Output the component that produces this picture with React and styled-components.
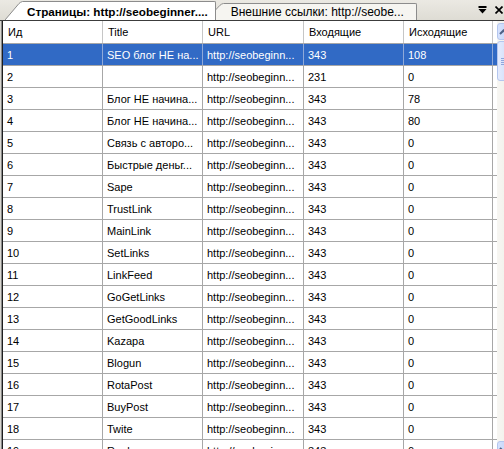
import React from 'react';
import styled, { createGlobalStyle } from 'styled-components';

const Global = createGlobalStyle`
  html, body { margin: 0; padding: 0; background: #ffffff; overflow: hidden; }
  body { font-family: Tahoma, "Liberation Sans", Arial, sans-serif; font-size: 11px; color: #000; }
  #root { width: 504px; height: 449px; }
`;

const Window = styled.div`
  width: 504px;
  height: 449px;
  overflow: hidden;
  display: flex;
  flex-direction: column;
  background: #e4e2da;
`;

const TabStrip = styled.div`
  height: 20px;
  flex-shrink: 0;
  display: flex;
  align-items: flex-end;
  padding-left: 5px;
  background: linear-gradient(#ebe9e3, #dedcd4);
  border-bottom: 1px solid #3c3c3c;
`;

const TabWrap = styled.div`
  position: relative;
  display: flex;
  align-items: stretch;
  flex-shrink: 0;
  height: ${p => (p.$active ? 19 : 17)}px;
  margin-left: ${p => (p.$first ? 0 : -10)}px;
  z-index: ${p => (p.$active ? 2 : 1)};
`;

const Slant = styled.svg`
  width: 18px;
  height: 100%;
  flex-shrink: 0;
  display: block;
`;

const TabBody = styled.div`
  display: flex;
  align-items: center;
  padding: 0 ${p => (p.$active ? 7 : 12)}px 0 ${p => (p.$active ? 4 : 7)}px;
  background: ${p => (p.$active ? '#ffffff' : '#f6f5f1')};
  border-top: 1px solid #8c8c8c;
  border-right: 1px solid #8c8c8c;
  border-top-right-radius: 2px;
  font-size: ${p => (p.$active ? 11.7 : 12)}px;
  font-weight: ${p => (p.$active ? 700 : 400)};
  white-space: nowrap;
  color: #000;
`;

const Spacer = styled.div`
  flex: 1;
`;

const ToolIcons = styled.div`
  display: flex;
  align-items: center;
  gap: 8px;
  height: 20px;
  padding-right: 1px;
  flex-shrink: 0;
`;

const Body = styled.div`
  height: 437px;
  flex-shrink: 0;
  display: flex;
  align-items: stretch;
`;

const LeftEdge = styled.div`
  width: 3px;
  flex-shrink: 0;
  background: linear-gradient(to right, #d8d6cf 0 1px, #8a8a8a 1px 2px, #1e1e1e 2px 3px);
`;

const ListPanel = styled.div`
  width: 494px;
  flex-shrink: 0;
  background: #ffffff;
  overflow: hidden;
`;

const COLS = '100px 100px 101px 100px 89px';

const HeaderRow = styled.div`
  display: grid;
  grid-template-columns: ${COLS};
  height: 22px;
  border-bottom: 1px solid #a7a7a7;
  background: #ffffff;
`;

const HeaderCell = styled.div`
  display: flex;
  align-items: center;
  padding-left: 5px;
  border-right: 1px solid #c6c6c6;
  font-size: 11px;
  white-space: nowrap;
  overflow: hidden;
`;

const Row = styled.div`
  display: grid;
  grid-template-columns: ${COLS};
  height: 21px;
  border-bottom: 1px solid #a7a7a7;
  background: ${p => (p.$selected ? '#316ac5' : '#ffffff')};
  color: ${p => (p.$selected ? '#ffffff' : '#000000')};
`;

const Cell = styled.div`
  display: flex;
  align-items: center;
  padding-left: 4px;
  border-right: 1px solid ${p => (p.$selected ? '#8fa9d8' : '#a7a7a7')};
  font-size: 11px;
  white-space: nowrap;
  overflow: hidden;
`;

const ScrollBar = styled.div`
  width: 17px;
  flex-shrink: 0;
  display: flex;
  flex-direction: column;
  padding-top: 2px;
  background: linear-gradient(to right, #f7f6f2, #eeede6);
`;

const ScrollButton = styled.div`
  height: 17px;
  flex-shrink: 0;
  box-sizing: border-box;
  border: 1px solid #b4c6ee;
  border-radius: 3px;
  background: linear-gradient(to right, #d6e2fd, #bccdf7);
  display: flex;
  align-items: center;
  justify-content: flex-start;
  padding-left: 1px;
`;

const Thumb = styled.div`
  height: 40px;
  margin-top: 1px;
  flex-shrink: 0;
  box-sizing: border-box;
  border: 1px solid #b4c6ee;
  border-radius: 3px;
  background: linear-gradient(to right, #e4ebfd, #c9d7f8);
  display: flex;
  align-items: center;
  padding-left: 3px;
`;

const Track = styled.div`
  flex: 1;
`;

const Chevron = ({ up }) => (
  <svg width="9" height="6" viewBox="0 0 9 6">
    <path
      d={up ? 'M1 5 L4.5 1.5 L8 5' : 'M1 1 L4.5 4.5 L8 1'}
      fill="none"
      stroke="#4d6185"
      strokeWidth="2"
    />
  </svg>
);

const Grip = () => (
  <svg width="8" height="8" viewBox="0 0 8 8">
    <g stroke="#8fa6dc" strokeWidth="1">
      <line x1="0" y1="1.5" x2="8" y2="1.5" />
      <line x1="0" y1="3.5" x2="8" y2="3.5" />
      <line x1="0" y1="5.5" x2="8" y2="5.5" />
      <line x1="0" y1="7.5" x2="8" y2="7.5" />
    </g>
  </svg>
);

const TabSlant = ({ active }) => (
  <Slant viewBox="0 0 18 19" preserveAspectRatio="none">
    <path
      d="M0 19 L14 2.5 Q15.5 1 17.5 0.5 L18 0.5 L18 19 Z"
      fill={active ? '#ffffff' : '#f6f5f1'}
    />
    <path d="M0 19 L14 2.5 Q15.5 1 17.5 0.5 L18 0.5" fill="none" stroke="#8c8c8c" strokeWidth="1" />
  </Slant>
);

const Tab = ({ active, first, children }) => (
  <TabWrap $active={active} $first={first}>
    <TabSlant active={active} />
    <TabBody $active={active}>{children}</TabBody>
  </TabWrap>
);

const DropIcon = () => (
  <svg width="9" height="8" viewBox="0 0 9 8">
    <rect x="0.5" y="0" width="8" height="2" fill="#000" />
    <path d="M0.5 3 L8.5 3 L4.5 7.5 Z" fill="#000" />
  </svg>
);

const CloseIcon = () => (
  <svg width="8" height="8" viewBox="0 0 8 8">
    <path d="M0.5 0.5 L7.5 7.5 M7.5 0.5 L0.5 7.5" stroke="#000" strokeWidth="1.7" />
  </svg>
);

const columns = ['Ид', 'Title', 'URL', 'Входящие', 'Исходящие'];

const URL_TEXT = 'http://seobeginn...';

const rows = [
  ['1', 'SEO блог НЕ на...', '343', '108'],
  ['2', '', '231', '0'],
  ['3', 'Блог НЕ начина...', '343', '78'],
  ['4', 'Блог НЕ начина...', '343', '80'],
  ['5', 'Связь с авторо...', '343', '0'],
  ['6', 'Быстрые деньг...', '343', '0'],
  ['7', 'Sape', '343', '0'],
  ['8', 'TrustLink', '343', '0'],
  ['9', 'MainLink', '343', '0'],
  ['10', 'SetLinks', '343', '0'],
  ['11', 'LinkFeed', '343', '0'],
  ['12', 'GoGetLinks', '343', '0'],
  ['13', 'GetGoodLinks', '343', '0'],
  ['14', 'Kazapa', '343', '0'],
  ['15', 'Blogun', '343', '0'],
  ['16', 'RotaPost', '343', '0'],
  ['17', 'BuyPost', '343', '0'],
  ['18', 'Twite', '343', '0'],
  ['19', 'Rookee', '343', '0'],
];

export default function App() {
  return (
    <>
      <Global />
      <Window>
        <TabStrip>
          <Tab active first>Страницы: http://seobeginner....</Tab>
          <Tab>Внешние ссылки: http://seobe...</Tab>
          <Spacer />
          <ToolIcons>
            <DropIcon />
            <CloseIcon />
          </ToolIcons>
        </TabStrip>
        <Body>
          <LeftEdge />
          <ListPanel>
            <HeaderRow>
              {columns.map(c => (
                <HeaderCell key={c}>{c}</HeaderCell>
              ))}
            </HeaderRow>
            {rows.map((r, i) => {
              const sel = i === 0;
              return (
                <Row key={r[0]} $selected={sel}>
                  <Cell $selected={sel}>{r[0]}</Cell>
                  <Cell $selected={sel}>{r[1]}</Cell>
                  <Cell $selected={sel}>{URL_TEXT}</Cell>
                  <Cell $selected={sel}>{r[2]}</Cell>
                  <Cell $selected={sel}>{r[3]}</Cell>
                </Row>
              );
            })}
          </ListPanel>
          <ScrollBar>
            <ScrollButton>
              <Chevron up />
            </ScrollButton>
            <Thumb>
              <Grip />
            </Thumb>
            <Track />
            <ScrollButton>
              <Chevron />
            </ScrollButton>
          </ScrollBar>
        </Body>
      </Window>
    </>
  );
}
